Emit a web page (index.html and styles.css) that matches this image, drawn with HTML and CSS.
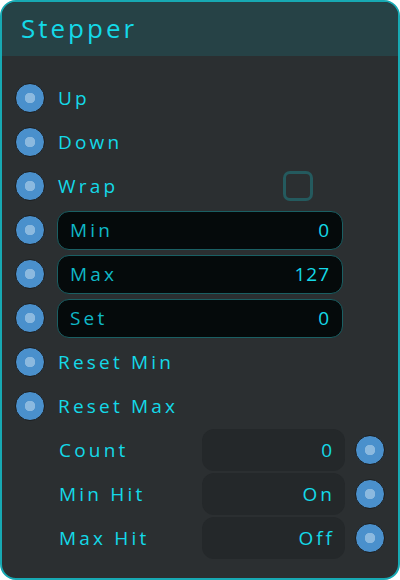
FILE: index.html
```html
<!DOCTYPE html>
<html>
<head>
<meta charset="utf-8">
<link rel="stylesheet" href="styles.css">
</head>
<body>
<div class="panel">
  <div class="header">Stepper</div>
  <div class="body">
    <div class="row"><span class="port"></span><span class="label">Up</span></div>
    <div class="row"><span class="port"></span><span class="label">Down</span></div>
    <div class="row"><span class="port"></span><span class="label grow">Wrap</span><span class="check"></span></div>
    <div class="row"><span class="port"></span><div class="field"><span>Min</span><span class="val">0</span></div></div>
    <div class="row"><span class="port"></span><div class="field"><span>Max</span><span class="val">127</span></div></div>
    <div class="row"><span class="port"></span><div class="field"><span>Set</span><span class="val">0</span></div></div>
    <div class="row"><span class="port"></span><span class="label">Reset Min</span></div>
    <div class="row"><span class="port"></span><span class="label">Reset Max</span></div>
    <div class="row out"><span class="label grow">Count</span><div class="outval">0</div><span class="port"></span></div>
    <div class="row out"><span class="label grow">Min Hit</span><div class="outval">On</div><span class="port"></span></div>
    <div class="row out"><span class="label grow">Max Hit</span><div class="outval">Off</div><span class="port"></span></div>
  </div>
</div>
</body>
</html>
```
FILE: styles.css
```css
* { box-sizing: border-box; }
html, body { margin: 0; padding: 0; background: #ffffff; }
body { font-family: "Open Sans", "DejaVu Sans", sans-serif; }
.panel {
  width: 400px;
  height: 580px;
  border: 2px solid #17a9b3;
  border-radius: 16px;
  background: #2b2f31;
  overflow: hidden;
  display: flex;
  flex-direction: column;
}
.header {
  height: 54px;
  background: #264246;
  color: #14d9e8;
  font-size: 26px;
  letter-spacing: 3px;
  padding: 9px 0 0 19px;
  line-height: 34px;
}
.body {
  padding: 20px 0 0 0;
  display: flex;
  flex-direction: column;
}
.row {
  height: 44px;
  display: flex;
  align-items: center;
  padding-left: 13px;
  color: #14d9e8;
  font-size: 19px;
  letter-spacing: 3.2px;
}
.port {
  width: 30px;
  height: 30px;
  border-radius: 50%;
  background: radial-gradient(circle, #8bb9df 0 5px, #4a90cc 5.5px);
  border: 1.5px solid #1c1f21;
  flex: none;
}
.label { margin-left: 13px; }
.grow { flex: 1; }
.check {
  width: 30px;
  height: 30px;
  border: 3px solid #245a5e;
  border-radius: 7px;
  margin-right: 85px;
}
.field {
  margin-left: 12px;
  width: 286px;
  height: 39px;
  background: #050a0b;
  border: 1px solid #1a5f63;
  border-radius: 12px;
  display: flex;
  align-items: center;
  justify-content: space-between;
  padding: 0 12px 0 12px;
  color: #0fb8c6;
}
.field .val { color: #14d9e8; letter-spacing: 1px; }
.row.out { padding-left: 44px; padding-right: 13px; }
.outval {
  width: 143px;
  height: 42px;
  background: #24282a;
  border-radius: 12px;
  display: flex;
  align-items: center;
  justify-content: flex-end;
  padding-right: 10px;
  margin-right: 10px;
  letter-spacing: 3px;
}
```
